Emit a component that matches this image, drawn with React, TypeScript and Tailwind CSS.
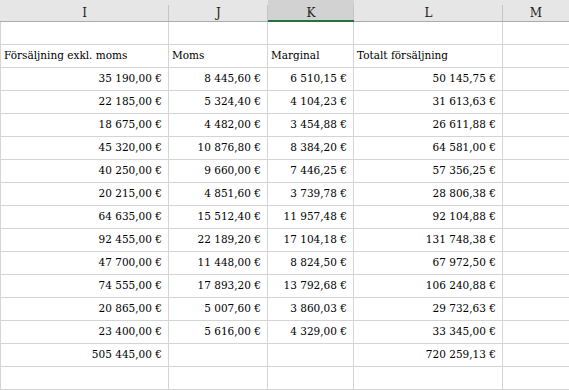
import React from "react";

const rows: [string, string, string, string][] = [
  ["35 190,00 €", "8 445,60 €", "6 510,15 €", "50 145,75 €"],
  ["22 185,00 €", "5 324,40 €", "4 104,23 €", "31 613,63 €"],
  ["18 675,00 €", "4 482,00 €", "3 454,88 €", "26 611,88 €"],
  ["45 320,00 €", "10 876,80 €", "8 384,20 €", "64 581,00 €"],
  ["40 250,00 €", "9 660,00 €", "7 446,25 €", "57 356,25 €"],
  ["20 215,00 €", "4 851,60 €", "3 739,78 €", "28 806,38 €"],
  ["64 635,00 €", "15 512,40 €", "11 957,48 €", "92 104,88 €"],
  ["92 455,00 €", "22 189,20 €", "17 104,18 €", "131 748,38 €"],
  ["47 700,00 €", "11 448,00 €", "8 824,50 €", "67 972,50 €"],
  ["74 555,00 €", "17 893,20 €", "13 792,68 €", "106 240,88 €"],
  ["20 865,00 €", "5 007,60 €", "3 860,03 €", "29 732,63 €"],
  ["23 400,00 €", "5 616,00 €", "4 329,00 €", "33 345,00 €"],
];

const cols = ["I", "J", "K", "L", "M"];

function Cell({
  children,
  right,
  first,
  last,
}: {
  children?: React.ReactNode;
  right?: boolean;
  first?: boolean;
  last?: boolean;
}) {
  return (
    <div
      className={
        "h-[23px] flex items-end pb-[3px] border-b border-[#d4d4d4] whitespace-nowrap overflow-hidden " +
        (last ? "" : "border-r ") +
        (first ? "border-l " : "") +
        (right ? "justify-end pr-[6px]" : "pl-[3px]")
      }
    >
      {children}
    </div>
  );
}

export default function App() {
  const body: (string | undefined)[][] = [
    [undefined, undefined, undefined, undefined, undefined],
    ["Försäljning exkl. moms", "Moms", "Marginal", "Totalt försäljning", undefined],
    ...rows.map((r) => [...r, undefined]),
    ["505 445,00 €", undefined, undefined, "720 259,13 €", undefined],
    [undefined, undefined, undefined, undefined, undefined],
  ];
  return (
    <div
      className="w-[569px] h-[390px] bg-white overflow-hidden text-[10.5px] text-black"
      style={{ fontFamily: '"DejaVu Serif", serif' }}
    >
      <div className="grid grid-cols-[169px_99px_86px_149px_66px] bg-[#e6e6e6] h-[22px]">
        {cols.map((c, i) => (
          <div
            key={c}
            className={
              "relative h-[22px] flex items-center justify-center text-[12px] text-[#222] " +
              (c === "K"
                ? "bg-[#d2d2d2] border-b-2 border-[#217346] text-[#1e5e3a]"
                : "border-b border-[#ababab]")
            }
          >
            <span className="mt-[5px]">{c}</span>
            {i < 4 && (
              <div className="absolute right-0 top-[5px] bottom-0 w-px bg-[#c4c4c4]" />
            )}
          </div>
        ))}
      </div>
      <div className="grid grid-cols-[169px_99px_86px_149px_66px]">
        {body.map((r, ri) =>
          r.map((v, ci) => (
            <Cell
              key={ri + "-" + ci}
              first={ci === 0}
              last={ci === 4}
              right={ri !== 1}
            >
              {v}
            </Cell>
          ))
        )}
      </div>
    </div>
  );
}
